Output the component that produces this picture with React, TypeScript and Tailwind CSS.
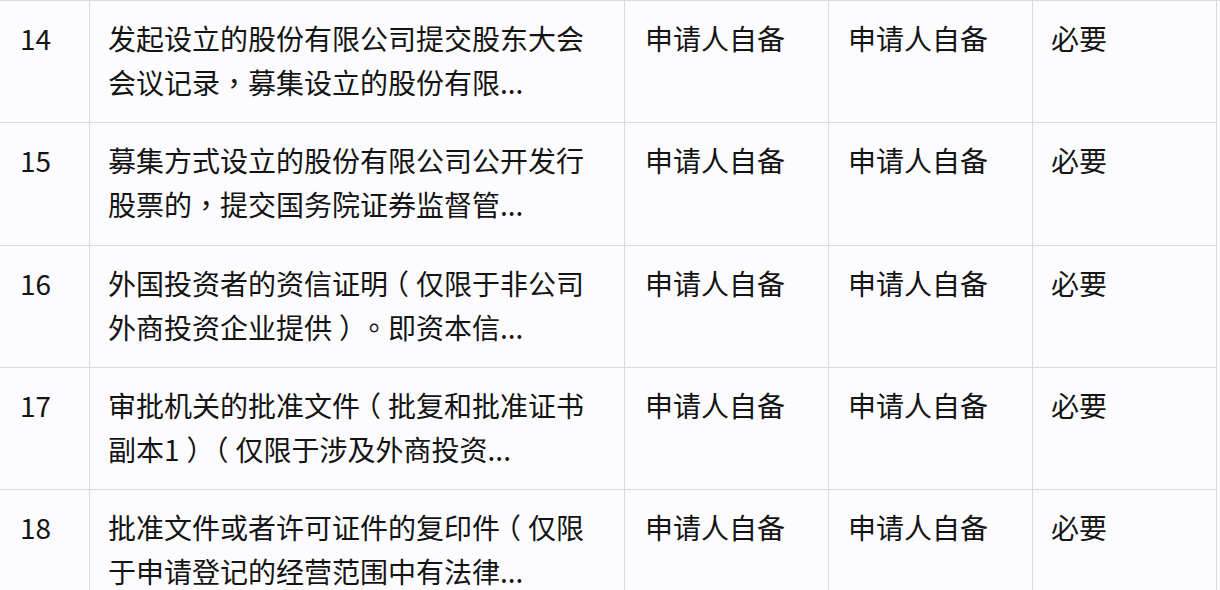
type Row = {
  no: string;
  lines: [string, string];
  source: string;
  form: string;
  need: string;
};

const rows: Row[] = [
  { no: '14', lines: ['发起设立的股份有限公司提交股东大会', '会议记录，募集设立的股份有限...'], source: '申请人自备', form: '申请人自备', need: '必要' },
  { no: '15', lines: ['募集方式设立的股份有限公司公开发行', '股票的，提交国务院证券监督管...'], source: '申请人自备', form: '申请人自备', need: '必要' },
  { no: '16', lines: ['外国投资者的资信证明（仅限于非公司', '外商投资企业提供）。即资本信...'], source: '申请人自备', form: '申请人自备', need: '必要' },
  { no: '17', lines: ['审批机关的批准文件（批复和批准证书', '副本1）（仅限于涉及外商投资...'], source: '申请人自备', form: '申请人自备', need: '必要' },
  { no: '18', lines: ['批准文件或者许可证件的复印件（仅限', '于申请登记的经营范围中有法律...'], source: '申请人自备', form: '申请人自备', need: '必要' },
];

const cell = 'h-[122.3px] border-b border-r border-[#d9d9de] pt-[15px] overflow-hidden';

// punctuation in the shot sits centered in its box
function Line({ text }: { text: string }) {
  const parts = text.split(/([，。（）])/).filter(Boolean);
  return (
    <div>
      {parts.map((p, i) => {
        if (p === '（' || p === '）')
          return (
            <span key={i} className="px-[0.25em] [font-feature-settings:'halt']">
              {p}
            </span>
          );
        if (p === '，' || p === '。')
          return (
            <span key={i} style={{ fontFamily: '"Noto Sans CJK TC", sans-serif' }}>
              {p}
            </span>
          );
        return <span key={i}>{p}</span>;
      })}
    </div>
  );
}

export default function App() {
  return (
    <div
      className="w-[1220px] h-[590px] overflow-hidden bg-[#fcfcfe] text-[#141414] text-[28px] leading-[44px]"
      style={{ fontFamily: '"Noto Sans CJK SC", "Noto Sans", sans-serif' }}
    >
      <div className="grid grid-cols-[90px_535px_204px_204px_184px] border-t border-[#d9d9de]">
        {rows.map((r) => (
          <div key={r.no} className="contents">
            <div className={`${cell} pl-[20px]`}>{r.no}</div>
            <div className={`${cell} pl-[18px] whitespace-nowrap`}>
              <Line text={r.lines[0]} />
              <Line text={r.lines[1]} />
            </div>
            <div className={`${cell} pl-[20px] whitespace-nowrap`}>{r.source}</div>
            <div className={`${cell} pl-[19px] whitespace-nowrap`}>{r.form}</div>
            <div className={`${cell} pl-[18px] whitespace-nowrap`}>{r.need}</div>
          </div>
        ))}
      </div>
    </div>
  );
}
